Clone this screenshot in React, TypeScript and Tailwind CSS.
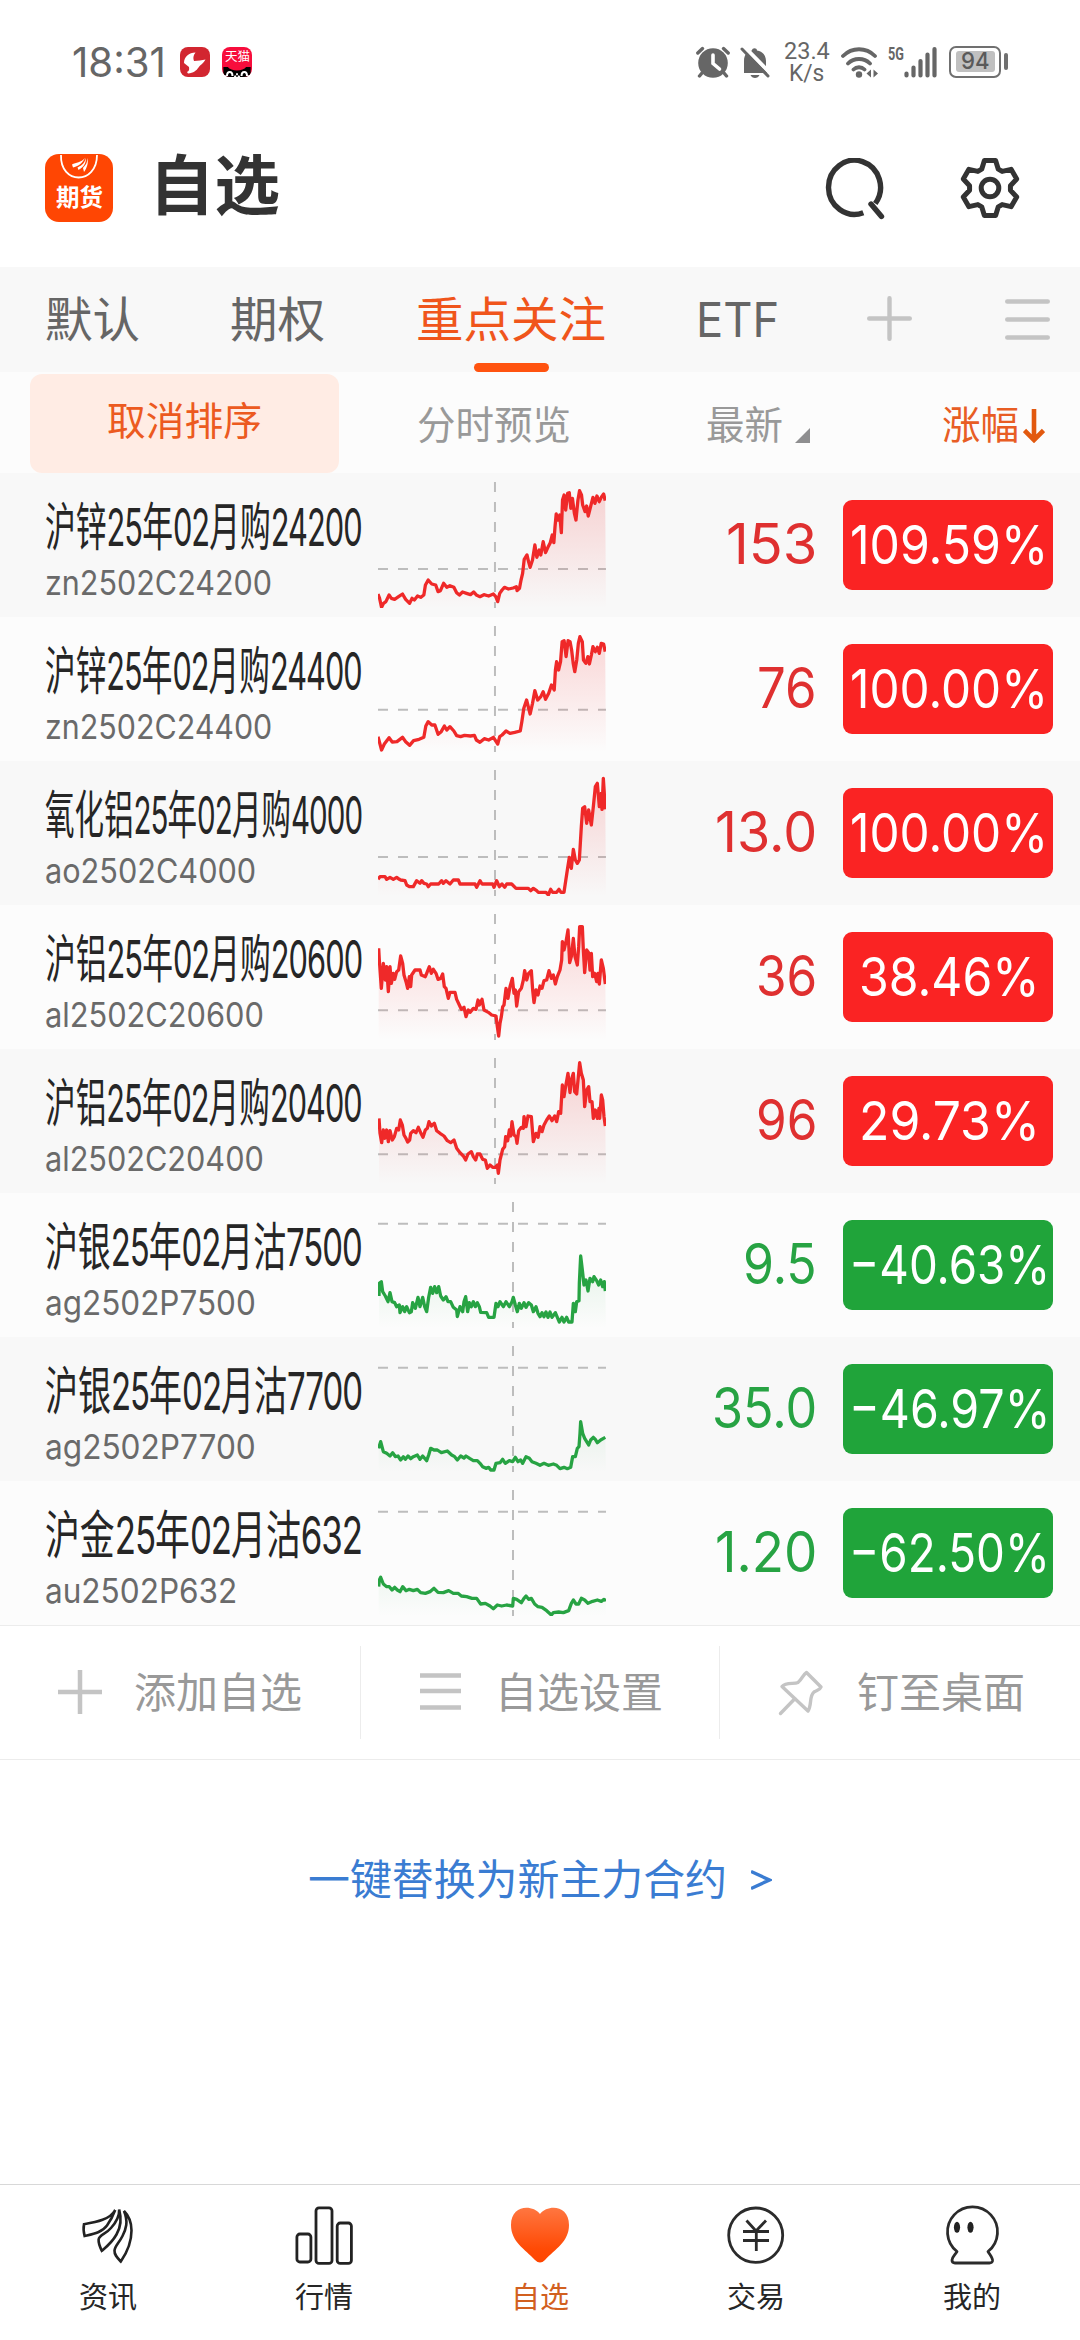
import { useLayoutEffect, useRef, useState } from "react";
import type { ReactNode } from "react";

/** Text condensed or stretched horizontally so that it takes exactly `width` pixels. */
function Fit({ width, className = "", children }: { width: number; className?: string; children: ReactNode }) {
  const ref = useRef<HTMLSpanElement>(null);
  const [scale, setScale] = useState(1);
  useLayoutEffect(() => {
    if (ref.current) setScale(width / ref.current.offsetWidth);
  }, [width]);
  return (
    <span className={`block shrink-0 whitespace-nowrap ${className}`} style={{ width }}>
      <span ref={ref} className="inline-block origin-left" style={{ transform: `scaleX(${scale})` }}>
        {children}
      </span>
    </span>
  );
}

const RED = "#ef2929";
const GREEN = "#27a343";

type Quote = {
  name: string;
  code: string;
  price: string;
  priceWidth: number;
  change: string;
  changeWidth: number;
  up: boolean;
  view: [number, number, number, number];
  cross: [number, number];
  points: string;
};

const quotes: Quote[] = [
  {
    name: "沪锌25年02月购24200", code: "zn2502C24200", price: "153", priceWidth: 91, change: "109.59%", changeWidth: 198, up: true,
    view: [956, 36, 577, 378], cross: [1252, 297],
    points: "956,372 960,385 965,412 970,400 976,395 984,375 990,385 998,388 1008,380 1018,372 1026,388 1036,400 1042,385 1048,390 1056,378 1064,382 1072,375 1076,345 1083,330 1092,342 1102,345 1108,365 1114,362 1122,340 1130,352 1138,347 1148,352 1155,368 1162,375 1170,366 1180,370 1190,374 1198,366 1206,376 1214,380 1224,374 1236,378 1248,372 1254,380 1259,395 1264,370 1270,360 1276,352 1286,357 1298,354 1306,350 1308,362 1314,355 1318,330 1322,310 1326,268 1333,255 1337,275 1341,292 1347,270 1353,225 1358,262 1364,240 1368,255 1374,215 1380,248 1386,232 1392,218 1397,195 1401,218 1404,170 1407,132 1412,150 1416,135 1420,188 1423,90 1427,75 1431,120 1436,70 1440,68 1444,115 1448,85 1453,130 1457,150 1462,90 1466,62 1471,75 1474,105 1480,125 1484,108 1488,138 1494,110 1500,82 1505,100 1510,78 1516,95 1522,80 1527,72 1531,92",
  },
  {
    name: "沪锌25年02月购24400", code: "zn2502C24400", price: "76", priceWidth: 60, change: "100.00%", changeWidth: 198, up: true,
    view: [956, 468, 577, 378], cross: [1252, 719],
    points: "956,800 965,840 972,822 984,803 992,816 1004,815 1018,802 1026,815 1036,826 1046,812 1060,808 1072,802 1077,768 1083,755 1092,765 1100,765 1108,793 1116,785 1124,768 1130,780 1138,770 1148,783 1155,797 1165,800 1175,796 1190,798 1200,796 1205,810 1214,817 1225,806 1236,810 1248,802 1259,822 1264,800 1270,795 1280,783 1290,790 1302,787 1316,783 1320,755 1325,715 1332,690 1341,732 1347,700 1353,662 1360,690 1368,680 1374,665 1380,688 1388,670 1395,645 1402,660 1405,600 1408,575 1413,600 1418,575 1422,515 1427,512 1432,560 1437,512 1442,515 1446,540 1450,580 1454,605 1459,570 1463,520 1467,500 1473,515 1476,570 1482,580 1487,560 1491,582 1496,555 1500,530 1506,545 1511,532 1516,550 1521,520 1527,522 1531,545",
  },
  {
    name: "氧化铝25年02月购4000", code: "ao2502C4000", price: "13.0", priceWidth: 102, change: "100.00%", changeWidth: 198, up: true,
    view: [54, 30, 684, 378], cross: [405, 291],
    points: "54,358 60,350 75,350 80,358 90,352 100,358 110,352 118,358 122,360 135,362 140,375 148,380 160,380 170,362 180,370 185,362 192,370 200,372 205,380 212,372 236,372 245,362 250,370 258,362 270,372 280,360 295,360 300,372 345,372 350,382 360,362 366,372 398,372 402,382 410,362 418,380 426,372 434,382 440,372 455,372 468,385 505,385 512,392 520,385 530,392 535,397 558,397 565,405 572,388 578,397 590,397 597,388 603,397 612,397 616,370 622,330 628,292 634,325 640,268 646,300 652,310 658,300 664,200 668,145 674,140 680,190 686,150 694,195 700,140 706,80 712,70 718,140 724,100 726,148 730,55 736,148",
  },
  {
    name: "沪铝25年02月购20600", code: "al2502C20600", price: "36", priceWidth: 61, change: "38.46%", changeWidth: 181, up: true,
    view: [54, 462, 684, 378], cross: [405, 751],
    points: "56,565 58,600 64,685 70,610 76,660 80,620 85,695 90,620 94,670 100,640 104,658 110,635 116,630 122,588 128,610 132,645 138,665 143,685 148,650 152,680 155,645 165,630 180,630 184,645 196,650 200,640 208,620 214,640 220,628 228,640 234,658 242,655 248,642 253,680 258,685 265,715 270,697 285,697 290,718 298,735 304,748 312,742 318,770 325,750 330,757 340,745 348,748 354,720 358,735 366,718 372,750 385,757 395,765 408,768 412,800 416,828 420,790 424,770 428,740 432,735 438,685 444,715 450,680 457,655 462,700 466,690 470,738 476,695 484,685 490,660 494,632 500,660 506,640 514,632 518,690 522,728 528,690 534,705 540,678 546,685 552,662 560,660 567,632 574,655 580,645 586,672 592,650 600,630 605,600 607,545 612,570 618,545 624,510 629,608 634,590 640,535 645,590 652,615 656,560 659,500 667,500 670,570 674,638 680,570 686,578 690,630 694,580 698,650 704,640 710,665 714,640 718,672 724,600 730,625 736,672",
  },
  {
    name: "沪铝25年02月购20400", code: "al2502C20400", price: "96", priceWidth: 61, change: "29.73%", changeWidth: 181, up: true,
    view: [54, 894, 684, 378], cross: [405, 1183],
    points: "57,1075 60,1120 65,1148 70,1110 74,1135 80,1110 85,1145 90,1112 97,1140 103,1130 110,1105 116,1110 121,1080 127,1095 132,1125 138,1135 143,1146 149,1140 152,1120 160,1112 168,1118 175,1102 182,1118 189,1132 196,1110 202,1105 207,1085 214,1098 223,1090 230,1112 240,1120 252,1128 262,1142 272,1148 282,1140 290,1165 300,1178 310,1188 317,1200 324,1182 334,1175 340,1190 347,1200 352,1182 360,1182 368,1198 376,1200 382,1225 390,1215 398,1222 406,1222 412,1215 415,1240 420,1200 428,1168 434,1160 437,1130 443,1142 448,1110 452,1128 456,1085 462,1125 468,1130 471,1150 476,1112 484,1102 490,1105 492,1070 498,1100 504,1068 514,1070 518,1120 520,1145 528,1120 534,1132 540,1100 546,1115 552,1095 560,1080 568,1068 576,1082 584,1068 590,1085 596,1055 602,1060 607,975 612,1010 616,985 624,940 630,998 634,960 640,940 644,995 650,1002 655,950 659,908 664,940 670,960 674,1040 680,990 686,980 690,1025 696,1025 700,1075 706,1050 712,1075 717,1045 719,1075 724,1005 728,1020 732,1070 736,1098",
  },
  {
    name: "沪银25年02月沽7500", code: "ag2502P7500", price: "9.5", priceWidth: 74, change: "−40.63%", changeWidth: 201, up: false,
    view: [54, 36, 684, 378], cross: [459, 101],
    points: "57,318 58,280 64,275 68,305 76,318 84,335 90,308 96,335 104,338 110,350 118,345 120,368 128,350 134,365 140,350 148,368 154,365 158,338 166,355 174,322 180,350 188,322 194,350 200,365 206,322 212,292 218,310 224,290 230,308 236,290 242,318 250,330 258,320 264,335 272,335 280,352 290,360 292,380 300,350 308,365 312,335 317,320 323,365 328,338 334,350 340,335 346,350 352,338 358,350 362,367 380,368 386,382 402,382 408,340 414,350 420,335 430,350 438,335 448,350 456,335 460,322 466,345 472,365 478,340 484,355 492,338 498,352 506,338 514,345 520,365 528,350 534,370 540,380 546,368 552,380 558,366 564,382 570,366 576,382 586,368 592,382 598,396 606,382 612,396 620,382 626,396 636,396 640,340 646,365 650,335 657,332 658,280 662,198 667,240 672,285 678,270 684,303 690,265 698,275 702,260 710,272 716,285 722,270 728,290 733,275 736,303",
  },
  {
    name: "沪银25年02月沽7700", code: "ag2502P7700", price: "35.0", priceWidth: 105, change: "−46.97%", changeWidth: 201, up: false,
    view: [54, 468, 684, 378], cross: [459, 533],
    points: "56,775 62,755 70,785 80,790 90,798 98,788 106,800 114,798 122,810 130,800 136,808 144,798 152,806 160,800 172,795 180,808 188,798 200,812 206,795 212,775 222,780 232,780 244,788 262,783 275,795 284,800 292,810 302,798 312,804 318,798 330,806 340,812 352,812 360,820 368,830 378,835 386,832 392,840 402,840 408,820 420,818 428,808 436,820 448,812 458,815 466,802 474,815 482,810 488,820 498,800 508,805 516,815 528,820 540,826 552,820 565,826 580,822 590,826 600,836 612,832 622,836 632,832 638,800 646,800 652,775 657,770 660,730 662,695 668,730 674,745 680,755 686,765 692,750 700,742 706,748 712,758 722,750 736,742",
  },
  {
    name: "沪金25年02月沽632", code: "au2502P632", price: "1.20", priceWidth: 102, change: "−62.50%", changeWidth: 201, up: false,
    view: [54, 900, 684, 378], cross: [459, 965],
    points: "56,1190 58,1170 62,1162 70,1182 80,1190 88,1190 96,1200 104,1192 112,1200 120,1205 128,1190 138,1202 148,1198 160,1202 172,1198 182,1208 196,1210 210,1205 222,1195 234,1207 250,1208 266,1202 280,1210 294,1210 304,1218 320,1220 336,1225 350,1225 362,1242 376,1240 390,1248 400,1256 412,1245 425,1248 440,1245 458,1248 460,1225 470,1228 484,1238 492,1225 498,1218 506,1228 514,1225 524,1242 534,1250 546,1252 560,1262 574,1275 580,1268 596,1266 610,1268 626,1262 634,1240 640,1230 648,1242 656,1242 664,1225 674,1230 684,1240 698,1234 712,1230 724,1234 732,1228 738,1232",
  },
];

const codeWidths = [227, 227, 211, 219, 219, 211, 211, 192];

function Sparkline({ quote }: { quote: Quote }) {
  const [x, y, w, h] = quote.view;
  const [cx, cy] = quote.cross;
  const color = quote.up ? RED : GREEN;
  const first = quote.points.split(",")[0];
  const gradient = `fill-${quote.code}`;
  return (
    <svg className="mt-[9px] ml-[15px] h-[126px] w-[228px] shrink-0" viewBox={`${x} ${y} ${w} ${h}`} preserveAspectRatio="none">
      <defs>
        <linearGradient id={gradient} gradientUnits="userSpaceOnUse" x1="0" x2="0" y1={y} y2={y + h}>
          <stop offset="0" stopColor={color} stopOpacity="0.2" />
          <stop offset="1" stopColor={color} stopOpacity="0" />
        </linearGradient>
      </defs>
      <g stroke="#bdbdbd" strokeWidth="2" strokeDasharray="10 10" fill="none">
        <path d={`M${cx} ${y}V${y + h}`} vectorEffect="non-scaling-stroke" />
        <path d={`M${x} ${cy}H${x + w}`} vectorEffect="non-scaling-stroke" />
      </g>
      <polygon points={`${quote.points} ${x + w},${y + h} ${first},${y + h}`} fill={`url(#${gradient})`} />
      <polyline points={quote.points} fill="none" stroke={color} strokeWidth="3.3" strokeLinejoin="round" vectorEffect="non-scaling-stroke" />
    </svg>
  );
}

function QuoteName({ text }: { text: string }) {
  return (
    <>
      {text.split(/(\d+)/).map((part, i) =>
        /\d/.test(part) ? (
          <span key={i} className="tracking-[-0.03em]">{part}</span>
        ) : (
          <span key={i}>{part}</span>
        ),
      )}
    </>
  );
}

function QuoteRow({ quote, index }: { quote: Quote; index: number }) {
  return (
    <div className={`flex h-[144px] ${index % 2 === 0 ? "bg-[#f8f8f8]" : "bg-[#fcfcfc]"}`}>
      <div className="ml-[45px] w-[318px] shrink-0 pt-[25px]">
        <Fit width={317} className="text-[52px] leading-[60px] text-[#262626]">
          <QuoteName text={quote.name} />
        </Fit>
        <Fit width={codeWidths[index]} className="mt-[5px] text-[34px] leading-[40px] text-[#6a6a6a]">
          {quote.code}
        </Fit>
      </div>
      <Sparkline quote={quote} />
      <div className={`flex h-[141px] flex-1 items-center justify-end pr-[26px] ${quote.up ? "text-[#df3030]" : "text-[#27a343]"}`}>
        <Fit width={quote.priceWidth} className="text-[56px] leading-[60px]">{quote.price}</Fit>
      </div>
      <div className={`mt-[27px] mr-[27px] flex h-[90px] w-[210px] shrink-0 items-center justify-center rounded-[9px] pl-[2px] text-white ${quote.up ? "bg-[#fa2323]" : "bg-[#20a43a]"}`}>
        <Fit width={quote.changeWidth} className="text-[54px] leading-[88px]">{quote.change}</Fit>
      </div>
    </div>
  );
}

function StatusBar() {
  return (
    <div className="flex h-[123px] items-center text-[#666]">
      <Fit width={94} className="ml-[72px] text-[41px] leading-[48px]">18:31</Fit>
      <svg className="ml-[14px] size-[30px]" viewBox="0 0 30 30">
        <rect width="30" height="30" rx="8" fill="#d22630" />
        <path d="M4 16C4 10 9 5.500 15.500 5.500c-2.500 3-2.500 6-1.500 8.500 4 0 8-1 11.500-1.500-2 4-5 5-7 8-2 3-5 5.500-10.500 6l-1-1.500c2-1 2.500-2 2-5L4 16Z" fill="#fff" />
      </svg>
      <div className="ml-[12px] flex size-[30px] flex-col overflow-hidden rounded-[8px] bg-[#f70d3c]">
        <Fit width={25} className="ml-[2.5px] text-[12px] leading-[20px] text-white">天猫</Fit>
        <svg className="h-[11px] w-[30px]" viewBox="0 0 30 11">
          <path d="M0 0h5c3 5 17 5 20 0h5v11H0Z" fill="#000" />
          <path d="M4 10c0-6 6-6 6 0M20 10c0-6 6-6 6 0M14 8h2M0 10h3M27 10h3M12 11l2-1M18 11l-2-1" stroke="#fff" strokeWidth="2.2" fill="none" />
        </svg>
      </div>
      <svg className="ml-auto h-[32px] w-[34px]" viewBox="0 0 34 32">
        <circle cx="17" cy="17" r="14.8" fill="#666" />
        <path d="M1.8 7 6.5 2.6M32.2 7l-4.7-4.4M6 27l-2.5 3M28 27l2.5 3" stroke="#666" strokeWidth="3.4" strokeLinecap="round" />
        <path d="M17 9v8.500l6.500 5.500" stroke="#fff" strokeWidth="3.600" fill="none" strokeLinecap="round" />
      </svg>
      <svg className="ml-[10px] h-[32px] w-[30px]" viewBox="0 0 30 32">
        <path d="M4 26V14C4 7 8 4 12 3.500c0-3 5-3 5 0C22 4 26 8 26 14v7l2 5Z" fill="#666" transform="translate(0 1)" />
        <path d="M10.500 29h9c-1.500 4-7.500 4-9 0Z" fill="#666" />
        <path d="M4 .5 31 28" stroke="#fff" strokeWidth="4" />
        <path d="M2 3 28 30" stroke="#666" strokeWidth="3" strokeLinecap="round" />
      </svg>
      <div className="ml-[13px] flex w-[47px] flex-col items-center font-[Roboto] text-[24px] leading-[22px]">
        <Fit width={46}>23.4</Fit>
        <Fit width={35}>K/s</Fit>
      </div>
      <svg className="ml-[11px] h-[32px] w-[38px]" viewBox="0 0 38 32">
        <path d="M2 10C11 1 25 1 34 10M7 17.500c6-6 16-6 22 0M12.500 23.500c3-3 8-3 11 0" stroke="#666" strokeWidth="3.800" fill="none" strokeLinecap="round" />
        <circle cx="18" cy="28.500" r="3.200" fill="#666" />
        <path d="M30 23.500v8l-4.500-4Z M32.500 23.500v8l4.500-4Z" fill="#666" />
      </svg>
      <div className="ml-[9px] flex h-[32px]">
        <Fit width={16} className="-mt-[3px] font-[Roboto] text-[19px] leading-[22px] font-bold">5G</Fit>
        <svg className="h-[32px] w-[33px]" viewBox="17 0 33 32">
          <path d="M19.500 27.500v2M26.500 21.500v8M33.500 15v14.500M40.500 8.500v21M47.500 3v26.500" stroke="#666" strokeWidth="4.200" strokeLinecap="round" />
        </svg>
      </div>
      <div className="ml-[12px] flex h-[32px] w-[52px] items-center justify-center rounded-[7px] border-[2.500px] border-[#707070]">
        <div className="flex h-[21px] w-[39px] items-center justify-center rounded-[3px] bg-[#c0c0c0]">
          <Fit width={29} className="text-[23px] leading-[21px] font-medium text-[#5a5a5a]">94</Fit>
        </div>
      </div>
      <div className="mr-[72px] ml-[3px] h-[17px] w-[4px] rounded-full bg-[#707070]" />
    </div>
  );
}

const gearPath = (() => {
  const tooth = [[-8.3, -18.8], [-5.6, -27.6], [5.6, -27.6], [8.3, -18.8]];
  const pts: string[] = [];
  for (let k = 0; k < 6; k++) {
    const a = (k * Math.PI) / 3;
    for (const [x, y] of tooth) {
      pts.push(`${(x * Math.cos(a) - y * Math.sin(a)).toFixed(2)} ${(x * Math.sin(a) + y * Math.cos(a)).toFixed(2)}`);
    }
  }
  return `M${pts.join("L")}Z`;
})();

function Header() {
  return (
    <header className="flex h-[144px] pb-[14px]">
      <div className="mt-[31px] ml-[45px] flex size-[68px] flex-col items-center overflow-hidden rounded-[14px] bg-[#ff4603]">
        <svg className="h-[29px] w-[40px]" viewBox="0 0 40 29">
          <path d="M2 -2C1 28 38 28 38 -2" transform="translate(0 3)" stroke="#fff" strokeWidth="1.800" fill="none" />
          <path d="M26 4C22 9 17 8 13 10.500l1 3c5-1 9-4 12-9.500ZM27 4c-2 7-6 8-8.500 9.500l1 2.500C25 13 27 9 27 4ZM28 4c1 6-3 8-4 10l1 4c3-4 5-10 3-14Z" fill="#fff" />
        </svg>
        <Fit width={47} className="text-[24px] leading-[30px] font-bold text-white">期货</Fit>
      </div>
      <Fit width={131} className="mt-[29px] ml-[36px] text-[65px] leading-[68px] font-bold text-[#333]">自选</Fit>
      <svg className="mt-[35px] ml-auto size-[62px]" viewBox="0 0 62 62" fill="none" stroke="#333" strokeWidth="5.400">
        <path d="M40.800 54.200A26 27 0 1 1 52.800 45" transform="translate(-.5 .5)" />
        <path d="M48 46 58.500 58.500" strokeLinecap="round" />
      </svg>
      <svg className="mt-[34px] mr-[59px] ml-[74px] size-[62px]" viewBox="-31 -31 62 62" fill="none" stroke="#333" strokeWidth="5" strokeLinejoin="round">
        <path d={gearPath} />
        <circle r="8.800" />
      </svg>
    </header>
  );
}

function Tabs() {
  return (
    <nav className="flex h-[105px] bg-[#f8f8f8] text-[48px] leading-[106px] text-[#666]">
      <Fit width={95} className="ml-[45px]">默认</Fit>
      <Fit width={95} className="ml-[90px]">期权</Fit>
      <div className="ml-[91px] flex w-[190px] flex-col items-center text-[#f0551b]">
        <Fit width={190} className="h-[96px]">重点关注</Fit>
        <div className="h-[9px] w-[75px] rounded-full bg-[#ff5310]" />
      </div>
      <Fit width={83} className="ml-[90px]">ETF</Fit>
      <svg className="mt-[29px] ml-[88px] size-[45px]" viewBox="0 0 45 45" stroke="#c4c4c4" strokeWidth="4.400" strokeLinecap="round">
        <path d="M22.500 2.200v40.600M2.200 22.500h40.600" />
      </svg>
      <svg className="mt-[30px] ml-[93px] size-[45px]" viewBox="0 0 45 45" stroke="#c4c4c4" strokeWidth="4.600" strokeLinecap="round">
        <path d="M2.300 4.500h40.400M2.300 22.500h40.400M2.300 40.500h40.400" />
      </svg>
    </nav>
  );
}

function ColumnHeads() {
  return (
    <div className="flex h-[101px] bg-[#fcfcfc] text-[39px] leading-[105px] text-[#999]">
      <div className="mt-[2px] ml-[30px] flex h-[99px] w-[309px] justify-center rounded-[12px] bg-[#ffece4] leading-[94px] text-[#ec5a20]">
        <Fit width={155}>取消排序</Fit>
      </div>
      <Fit width={154} className="ml-[78px]">分时预览</Fit>
      <Fit width={77} className="ml-[135px]">最新</Fit>
      <svg className="mt-[56px] ml-[12px] size-[15px]" viewBox="0 0 15 15"><path d="M15 0v15H0Z" fill="#8e8e90" /></svg>
      <Fit width={77} className="ml-[132px] text-[#e85d24]">涨幅</Fit>
      <svg className="mt-[37px] ml-[4px] h-[34px] w-[22px]" viewBox="0 0 22 34" fill="none" stroke="#e2590f" strokeWidth="4.600">
        <path d="M11 0v31M1.500 21.500 11 31l9.500-9.500" />
      </svg>
    </div>
  );
}

function Actions() {
  return (
    <div className="flex h-[135px] border-y-[1.500px] border-[#ececec] py-[20px] text-[42px] leading-[94px] text-[#999]">
      <div className="flex h-[93px] w-[361px] border-r border-[#ececec]">
        <svg className="mt-[24px] ml-[58px] size-[44px]" viewBox="0 0 44 44" stroke="#c4c4c4" strokeWidth="4.500"><path d="M22 0v44M0 22h44" /></svg>
        <Fit width={168} className="ml-[32px]">添加自选</Fit>
      </div>
      <div className="flex h-[93px] w-[359px] border-r border-[#ececec]">
        <svg className="mt-[24px] ml-[59px] h-[44px] w-[41px]" viewBox="0 0 41 44" stroke="#c4c4c4" strokeWidth="4.500"><path d="M0 5.500h41M0 21h41M0 37.500h41" /></svg>
        <Fit width={168} className="ml-[34px]">自选设置</Fit>
      </div>
      <div className="flex h-[93px]">
        <svg className="mt-[24px] ml-[58px] size-[46px]" viewBox="0 0 46 46" fill="none" stroke="#c4c4c4" strokeWidth="3.400" strokeLinejoin="round" strokeLinecap="round">
          <path d="M28.500 2.500 43 17c-1 3-4 3-7 5-5 4-2 13-6 19L4 16.500c4-5 12-2 16-4 4-3 5-8 8.500-10ZM17 28.500 2.500 43.500" />
        </svg>
        <Fit width={168} className="ml-[33px]">钉至桌面</Fit>
      </div>
    </div>
  );
}

function NewsIcon() {
  return (
    <svg className="h-[60px] w-[60px]" viewBox="0 0 60 60" fill="none" stroke="#222" strokeWidth="2.600">
      <path d="M37.200 5C32 14.500 19 17 6 19.200 5.200 23 5.400 26 6.600 31 15 29 24 27.500 29 20.500 32.500 15.500 35 11 37.200 5Z" />
      <path d="M41.200 4.500C41.500 11 37.500 18 33 23 27.500 29.500 21.500 29.500 20.600 34.500 20.300 38.500 22 42 23.800 45.800 29 41.500 34 37.500 38.500 29.500 43.500 21 43.500 13 41.200 4.500Z" />
      <path d="M46 6C50.500 17 48 24 44.500 31 41 38 37 41 36.500 45.500 36.300 50 39 52.500 42.800 56.500 48 49 53.500 39 53.500 25.500 53.500 17 50 10 46 6Z" />
    </svg>
  );
}

function BarsIcon() {
  return (
    <svg className="h-[60px] w-[60px]" viewBox="0 0 60 60" fill="none" stroke="#222" strokeWidth="2.800">
      <rect x="2.900" y="29" width="14" height="28" rx="3" />
      <rect x="22" y="2.800" width="16" height="55.600" rx="3" />
      <rect x="43.200" y="18" width="14.200" height="40.400" rx="3" />
    </svg>
  );
}

function HeartIcon() {
  return (
    <svg className="h-[60px] w-[60px]" viewBox="0 0 60 60">
      <defs>
        <linearGradient id="heart" x1="0" x2="0" y1="0" y2="1">
          <stop offset="0" stopColor="#ff7640" />
          <stop offset="0.75" stopColor="#ff4a05" />
          <stop offset="1" stopColor="#ff4500" />
        </linearGradient>
      </defs>
      <path d="M30 9C22-1 1 0 1 20c0 17 14 24 24 35q5 5 10 0C45 44 59 37 59 20 59 0 38-1 30 9Z" fill="url(#heart)" />
    </svg>
  );
}

function YenIcon() {
  return (
    <svg className="h-[60px] w-[60px]" viewBox="0 0 60 60" fill="none" stroke="#2b2b2b" strokeWidth="2.800">
      <ellipse cx="29.700" cy="30.200" rx="27" ry="27.200" />
      <path d="M20.500 15.500 30 26l10-10.500M17 26.500h26M17 35.500h26M30.300 26v20" />
    </svg>
  );
}

function MineIcon() {
  return (
    <svg className="h-[60px] w-[60px]" viewBox="0 0 60 60" fill="none" stroke="#2b2b2b" strokeWidth="2.800">
      <path d="M15 46.500A25 25 0 1 1 46 46.500C48 50 51 53 50.500 56q-.5 2-3 2H13q-3 0-3-3c0-3 3-5 5-8.500Z" strokeLinejoin="round" />
      <ellipse cx="15" cy="22.300" rx="3.100" ry="5.500" fill="#222" stroke="none" />
      <ellipse cx="28.500" cy="22.300" rx="3.100" ry="5.500" fill="#222" stroke="none" />
    </svg>
  );
}

const navItems = [
  { label: "资讯", icon: <NewsIcon />, active: false },
  { label: "行情", icon: <BarsIcon />, active: false },
  { label: "自选", icon: <HeartIcon />, active: true },
  { label: "交易", icon: <YenIcon />, active: false },
  { label: "我的", icon: <MineIcon />, active: false },
];

export default function App() {
  return (
    <div className="flex h-[2340px] w-[1080px] flex-col overflow-hidden bg-white font-['Inter','Noto_Sans_CJK_SC',sans-serif]">
      <StatusBar />
      <Header />
      <Tabs />
      <ColumnHeads />
      <main>
        {quotes.map((q, i) => (
          <QuoteRow key={q.code} quote={q} index={i} />
        ))}
      </main>
      <Actions />
      <div className="mt-[90px] flex justify-center text-[42px] leading-[60px] text-[#3a7cd2]">
        <Fit width={419} className="ml-[-1px]">一键替换为新主力合约</Fit>
        <svg className="mt-[20px] ml-[24px] h-[20px] w-[21px]" viewBox="0 0 21 20" fill="none" stroke="#3a7cd2" strokeWidth="3.400">
          <path d="M0 1.500 18.500 10 0 18.500" />
        </svg>
      </div>
      <footer className="mt-auto grid h-[156px] grid-cols-5 border-t border-[#d8d8d8] pt-[20px]">
        {navItems.map((item) => (
          <div key={item.label} className={`flex flex-col items-center ${item.active ? "text-[#d2601f]" : "text-[#262626]"}`}>
            {item.icon}
            <Fit width={58} className="mt-[13px] text-[29px] leading-[40px]">{item.label}</Fit>
          </div>
        ))}
      </footer>
    </div>
  );
}
